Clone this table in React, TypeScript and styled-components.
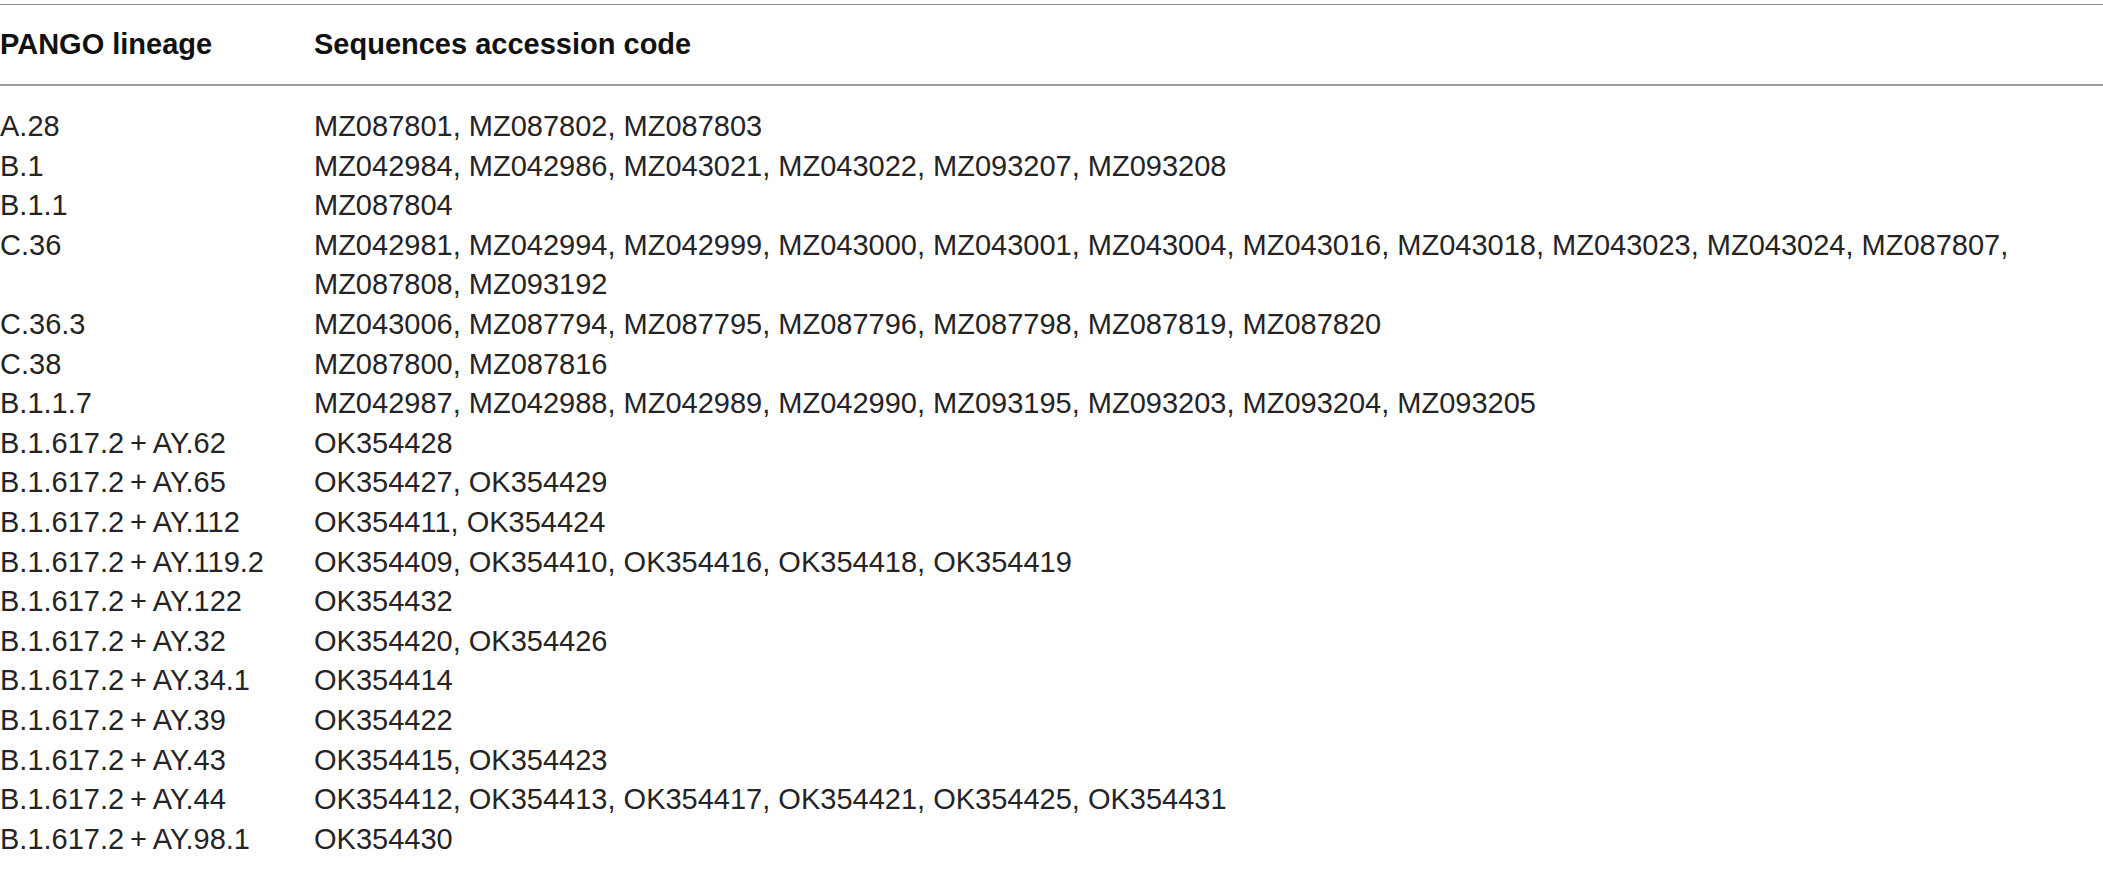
import React from "react";
import styled, { createGlobalStyle } from "styled-components";

const GlobalStyle = createGlobalStyle`
  html, body {
    margin: 0;
    padding: 0;
    background: #ffffff;
  }
  body {
    font-family: "Liberation Sans", Helvetica, Arial, sans-serif;
    color: #262324;
  }
`;

const Table = styled.div`
  display: flex;
  flex-direction: column;
  padding-top: 4px;
  width: 2103px;
`;

const HeaderRow = styled.div`
  display: grid;
  grid-template-columns: 314px 1fr;
  align-items: center;
  height: 79px;
  border-top: 1px solid #8e8e8e;
  border-bottom: 2px solid #9c9c9c;
`;

const HeadCell = styled.div`
  font-size: 29px;
  font-weight: 700;
  color: #111;
  line-height: 1;
`;

const Body = styled.div`
  display: flex;
  flex-direction: column;
  padding-top: 21px;
`;

const Row = styled.div`
  display: grid;
  grid-template-columns: 314px 1fr;
  font-size: 29px;
  line-height: 39.6px;
  font-weight: 400;
`;

const Cell = styled.div<{ $nowrap?: boolean }>`
  white-space: ${(p) => (p.$nowrap ? "nowrap" : "normal")};
  padding-right: 60px;
`;

type Entry = { lineage: string; codes: string[] };

const spacedPlus = (s: string) => s.replace("+", "\u202F+\u202F");

const data: Entry[] = [
  { lineage: "A.28", codes: ["MZ087801", "MZ087802", "MZ087803"] },
  { lineage: "B.1", codes: ["MZ042984", "MZ042986", "MZ043021", "MZ043022", "MZ093207", "MZ093208"] },
  { lineage: "B.1.1", codes: ["MZ087804"] },
  {
    lineage: "C.36",
    codes: [
      "MZ042981", "MZ042994", "MZ042999", "MZ043000", "MZ043001", "MZ043004", "MZ043016",
      "MZ043018", "MZ043023", "MZ043024", "MZ087807", "MZ087808", "MZ093192",
    ],
  },
  { lineage: "C.36.3", codes: ["MZ043006", "MZ087794", "MZ087795", "MZ087796", "MZ087798", "MZ087819", "MZ087820"] },
  { lineage: "C.38", codes: ["MZ087800", "MZ087816"] },
  {
    lineage: "B.1.1.7",
    codes: ["MZ042987", "MZ042988", "MZ042989", "MZ042990", "MZ093195", "MZ093203", "MZ093204", "MZ093205"],
  },
  { lineage: "B.1.617.2+AY.62", codes: ["OK354428"] },
  { lineage: "B.1.617.2+AY.65", codes: ["OK354427", "OK354429"] },
  { lineage: "B.1.617.2+AY.112", codes: ["OK354411", "OK354424"] },
  { lineage: "B.1.617.2+AY.119.2", codes: ["OK354409", "OK354410", "OK354416", "OK354418", "OK354419"] },
  { lineage: "B.1.617.2+AY.122", codes: ["OK354432"] },
  { lineage: "B.1.617.2+AY.32", codes: ["OK354420", "OK354426"] },
  { lineage: "B.1.617.2+AY.34.1", codes: ["OK354414"] },
  { lineage: "B.1.617.2+AY.39", codes: ["OK354422"] },
  { lineage: "B.1.617.2+AY.43", codes: ["OK354415", "OK354423"] },
  { lineage: "B.1.617.2+AY.44", codes: ["OK354412", "OK354413", "OK354417", "OK354421", "OK354425", "OK354431"] },
  { lineage: "B.1.617.2+AY.98.1", codes: ["OK354430"] },
];

export default function App() {
  return (
    <>
      <GlobalStyle />
      <Table>
        <HeaderRow>
          <HeadCell>PANGO lineage</HeadCell>
          <HeadCell>Sequences accession code</HeadCell>
        </HeaderRow>
        <Body>
          {data.map((d) => (
            <Row key={d.lineage}>
              <Cell $nowrap>{spacedPlus(d.lineage)}</Cell>
              <Cell>{d.codes.join(", ")}</Cell>
            </Row>
          ))}
        </Body>
      </Table>
    </>
  );
}
